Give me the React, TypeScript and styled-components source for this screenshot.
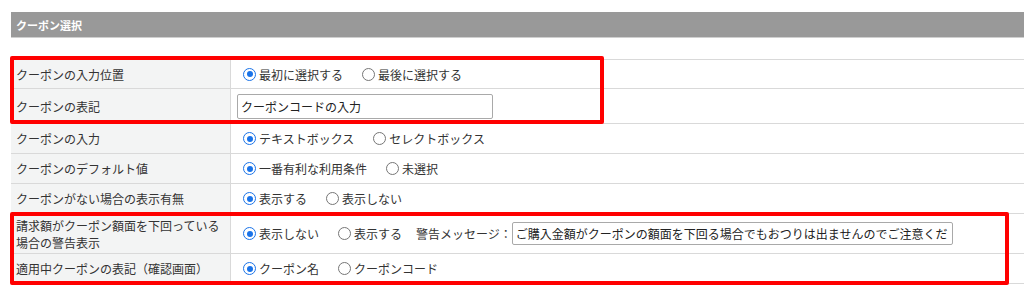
import React from 'react';
import styled, { createGlobalStyle } from 'styled-components';

const GlobalStyle = createGlobalStyle`
    body {
        margin: 0;
        background: #fff;
        font-family: "Noto Sans CJK JP", "Noto Sans", sans-serif;
        color: #333;
    }
`;

const Page = styled('div')`
    position: relative;
    width: 1024px;
    height: 293px;
    overflow: hidden;
    padding-top: 12px;
    box-sizing: border-box;
`;

const SectionHeader = styled('div')`
    margin-left: 11px;
    height: 25px;
    display: flex;
    align-items: center;
    padding-left: 5px;
    background-color: #999;
    border-bottom: 1px solid #cfcfcf;
    color: #fff;
    font-size: 11px;
    font-weight: bold;
`;

const SettingsTable = styled('div')`
    margin-top: 21px;
    margin-left: 11px;
    border-top: 1px solid #d9d9d9;
`;

const Row = styled('div')<{ $height: number }>`
    display: grid;
    grid-template-columns: 220px 1fr;
    height: ${({ $height }) => $height}px;
    border-bottom: 1px solid #d9d9d9;
    box-sizing: border-box;
`;

const Label = styled('div')`
    display: flex;
    align-items: center;
    padding-left: 5px;
    background-color: #f3f4f4;
    border-right: 1px solid #d9d9d9;
    font-size: 12px;
    line-height: 17px;
    white-space: nowrap;
    color: #333;
`;

const Value = styled('div')`
    display: flex;
    align-items: center;
    padding-left: 6px;
    font-size: 12px;
    white-space: nowrap;
    color: #333;
`;

const RadioOption = styled('label')`
    display: flex;
    align-items: center;
    gap: 3px;
    margin-left: 6px;
    margin-right: 13px;
`;

const RadioMark = styled('span')<{ $checked: boolean }>`
    width: 13px;
    height: 13px;
    border-radius: 50%;
    box-sizing: border-box;
    border: 1.5px solid ${({ $checked }) => ($checked ? '#1a73e8' : '#767676')};
    display: flex;
    align-items: center;
    justify-content: center;
    &::after {
        content: '';
        width: 6px;
        height: 6px;
        border-radius: 50%;
        background: ${({ $checked }) => ($checked ? '#1a73e8' : 'transparent')};
    }
`;

const TextInput = styled('input')<{ $width: number; $height: number }>`
    width: ${({ $width }) => $width}px;
    height: ${({ $height }) => $height}px;
    box-sizing: border-box;
    border: 1px solid #a9a9a9;
    border-radius: 2px;
    padding: 0 3px;
    font-family: inherit;
    font-size: 12px;
    color: #222;
`;

const WarnLabel = styled('span')`
    margin-left: 1px;
`;

const Highlight = styled('div')<{ $left: number; $top: number; $width: number; $height: number }>`
    position: absolute;
    left: ${({ $left }) => $left}px;
    top: ${({ $top }) => $top}px;
    width: ${({ $width }) => $width}px;
    height: ${({ $height }) => $height}px;
    border: 4px solid #ff0000;
    border-radius: 2px;
    box-sizing: border-box;
    pointer-events: none;
`;

function Radio({ checked, text }: { checked: boolean; text: string }) {
    return (
        <RadioOption>
            <RadioMark $checked={checked} />
            <span>{text}</span>
        </RadioOption>
    );
}

export default function App() {
    return (
        <Page>
            <GlobalStyle />
            <SectionHeader>クーポン選択</SectionHeader>
            <SettingsTable>
                <Row $height={29}>
                    <Label>クーポンの入力位置</Label>
                    <Value>
                        <Radio checked text="最初に選択する" />
                        <Radio checked={false} text="最後に選択する" />
                    </Value>
                </Row>
                <Row $height={35}>
                    <Label>クーポンの表記</Label>
                    <Value>
                        <TextInput $width={256} $height={25} defaultValue="クーポンコードの入力" />
                    </Value>
                </Row>
                <Row $height={30}>
                    <Label>クーポンの入力</Label>
                    <Value>
                        <Radio checked text="テキストボックス" />
                        <Radio checked={false} text="セレクトボックス" />
                    </Value>
                </Row>
                <Row $height={30}>
                    <Label>クーポンのデフォルト値</Label>
                    <Value>
                        <Radio checked text="一番有利な利用条件" />
                        <Radio checked={false} text="未選択" />
                    </Value>
                </Row>
                <Row $height={30}>
                    <Label>クーポンがない場合の表示有無</Label>
                    <Value>
                        <Radio checked text="表示する" />
                        <Radio checked={false} text="表示しない" />
                    </Value>
                </Row>
                <Row $height={40}>
                    <Label>請求額がクーポン額面を下回っている<br />場合の警告表示</Label>
                    <Value>
                        <Radio checked text="表示しない" />
                        <Radio checked={false} text="表示する" />
                        <WarnLabel>警告メッセージ：</WarnLabel>
                        <TextInput $width={441} $height={23} defaultValue="ご購入金額がクーポンの額面を下回る場合でもおつりは出ませんのでご注意ください。" />
                    </Value>
                </Row>
                <Row $height={30}>
                    <Label>適用中クーポンの表記（確認画面）</Label>
                    <Value>
                        <Radio checked text="クーポン名" />
                        <Radio checked={false} text="クーポンコード" />
                    </Value>
                </Row>
            </SettingsTable>
            <Highlight $left={10} $top={56} $width={594} $height={68} />
            <Highlight $left={10} $top={212} $width={999} $height={73} />
        </Page>
    );
}
